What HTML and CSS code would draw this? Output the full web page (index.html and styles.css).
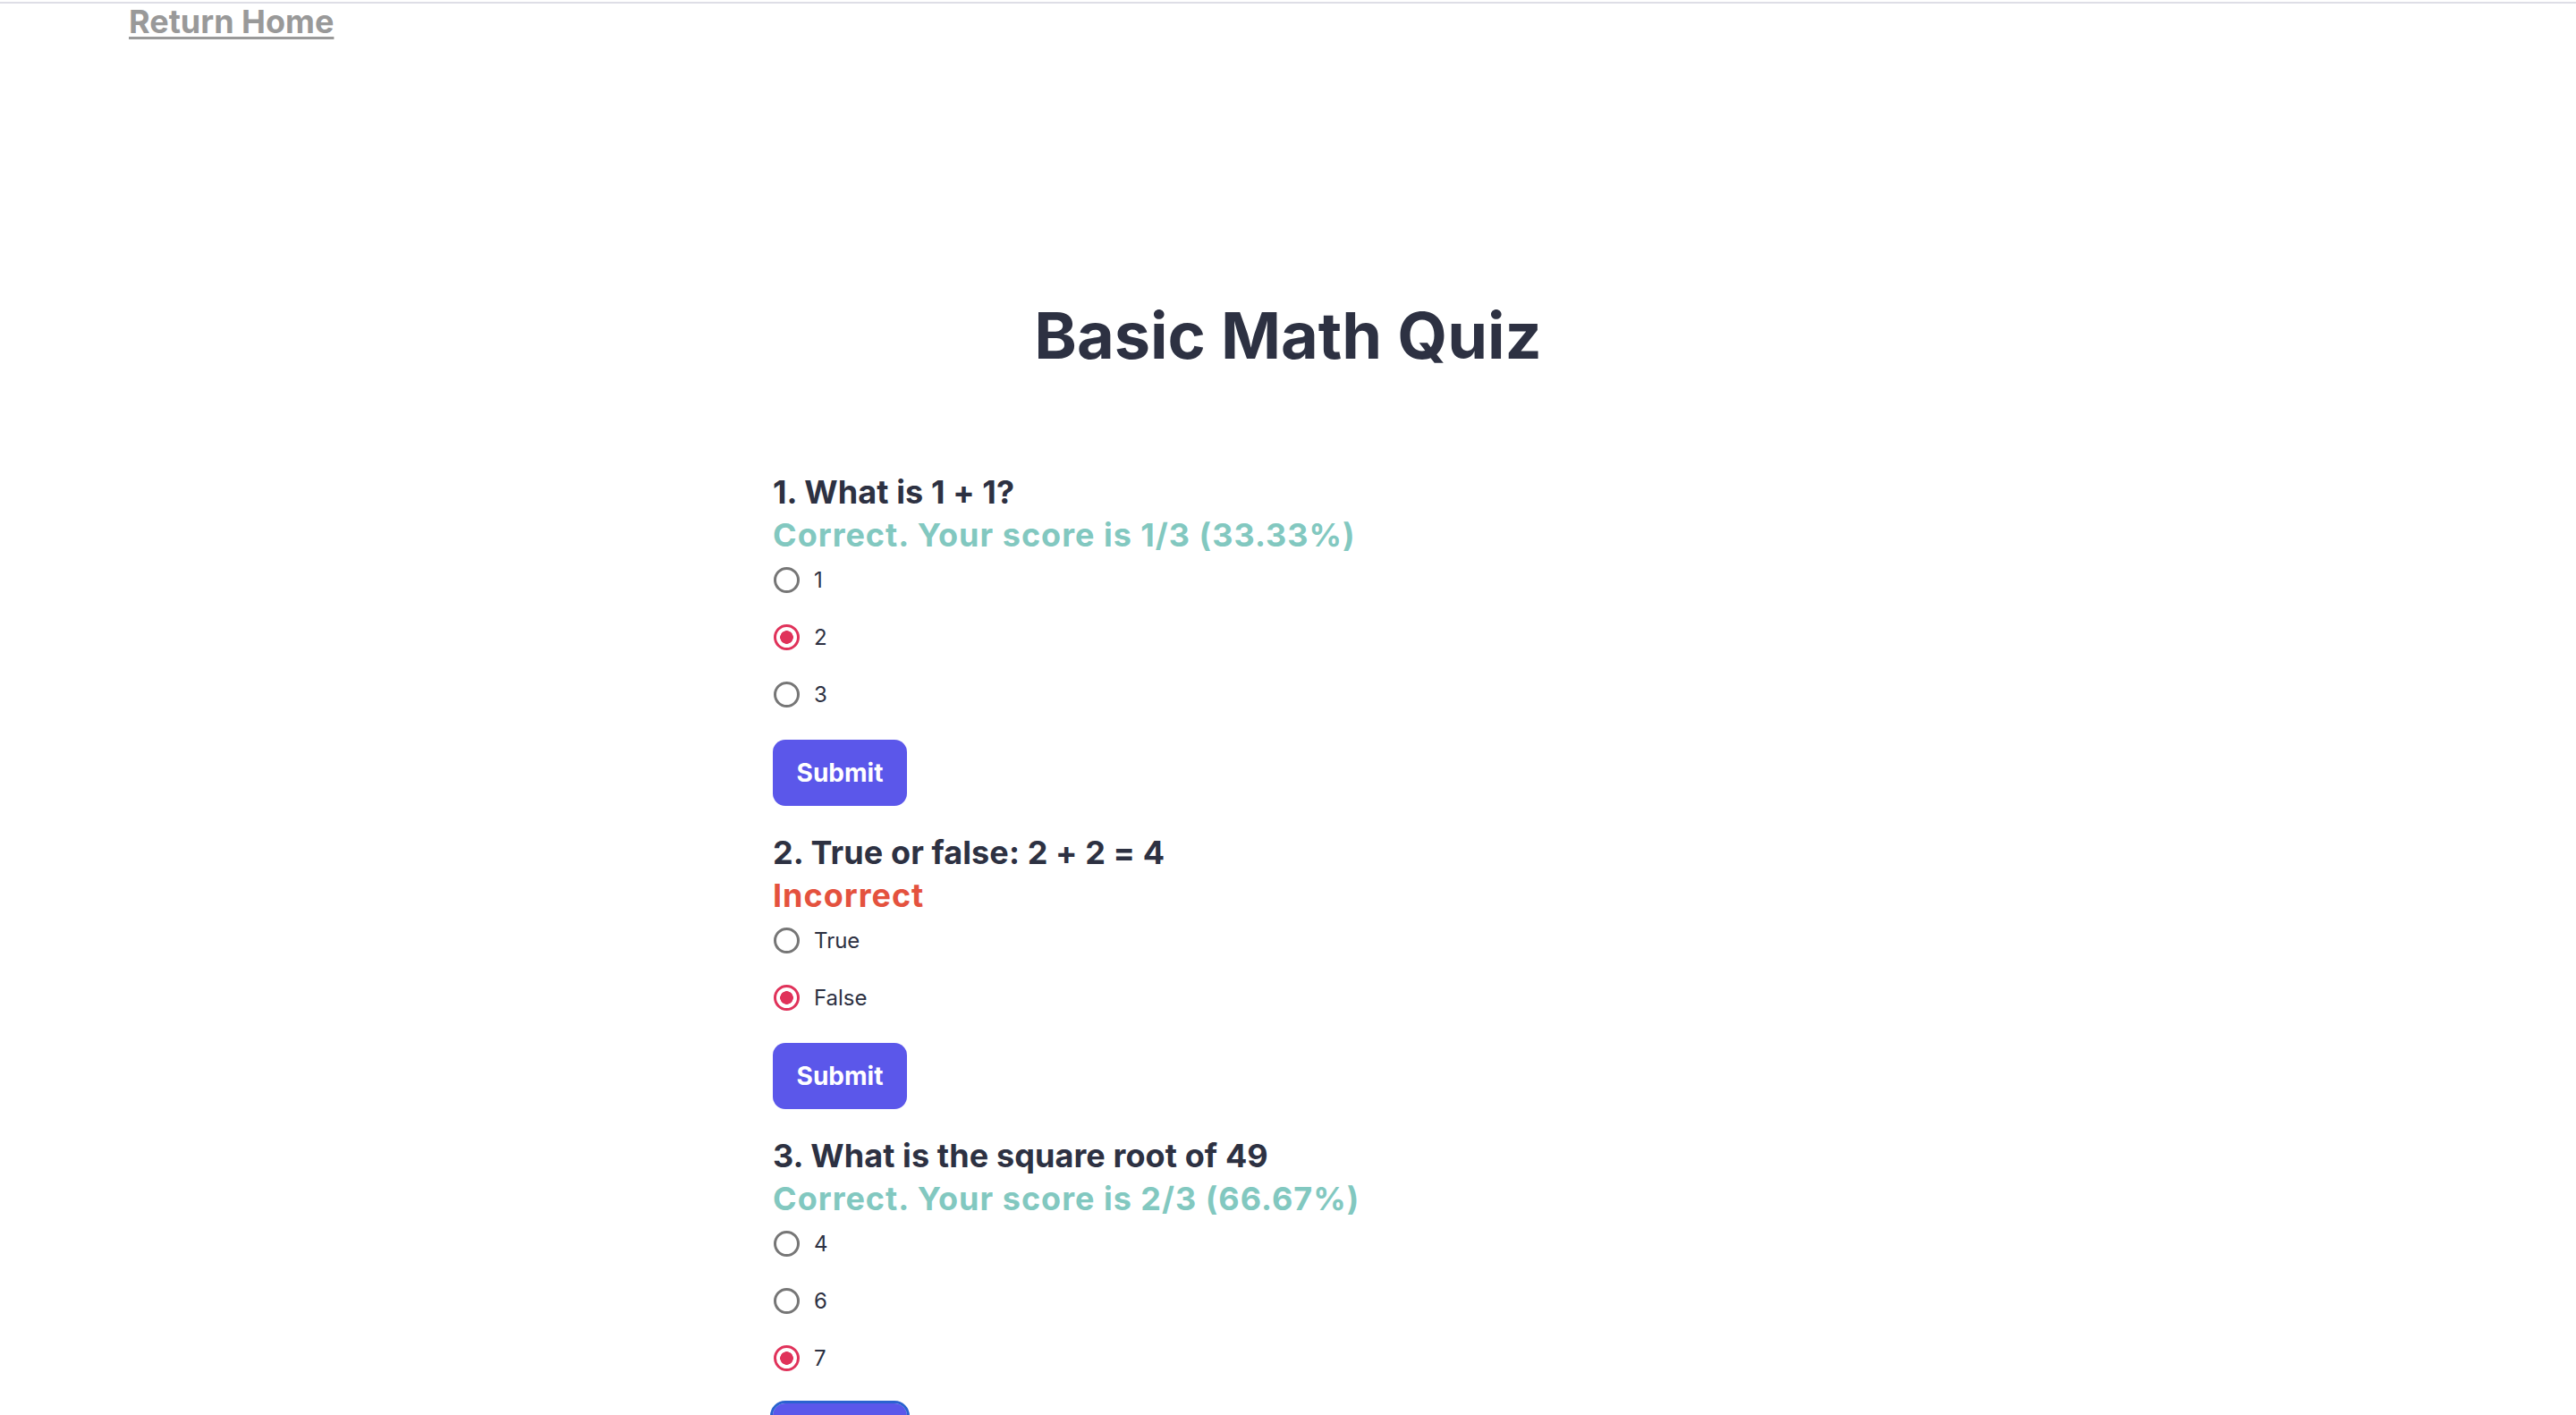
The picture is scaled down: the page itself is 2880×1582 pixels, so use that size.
FILE: index.html
```html
<!DOCTYPE html>
<html lang="en">
<head>
<meta charset="utf-8">
<title>Basic Math Quiz</title>
<link rel="stylesheet" href="styles.css">
</head>
<body>
<div class="topline"></div>
<nav class="nav"><a href="#" class="home-link">Return Home</a></nav>
<main class="container">
  <h1 class="title">Basic Math Quiz</h1>

  <form class="question">
    <h2 class="q-heading">1. What is 1 + 1?</h2>
    <p class="feedback correct">Correct. Your score is 1/3 (33.33%)</p>
    <div class="options">
      <label class="option"><input type="radio" name="q1" class="radio"><span>1</span></label>
      <label class="option"><input type="radio" name="q1" class="radio" checked><span>2</span></label>
      <label class="option"><input type="radio" name="q1" class="radio"><span>3</span></label>
    </div>
    <button type="button" class="submit">Submit</button>
  </form>

  <form class="question">
    <h2 class="q-heading">2. True or false: 2 + 2 = 4</h2>
    <p class="feedback incorrect">Incorrect</p>
    <div class="options">
      <label class="option"><input type="radio" name="q2" class="radio"><span>True</span></label>
      <label class="option"><input type="radio" name="q2" class="radio" checked><span>False</span></label>
    </div>
    <button type="button" class="submit">Submit</button>
  </form>

  <form class="question">
    <h2 class="q-heading">3. What is the square root of 49</h2>
    <p class="feedback correct">Correct. Your score is 2/3 (66.67%)</p>
    <div class="options">
      <label class="option"><input type="radio" name="q3" class="radio"><span>4</span></label>
      <label class="option"><input type="radio" name="q3" class="radio"><span>6</span></label>
      <label class="option"><input type="radio" name="q3" class="radio" checked><span>7</span></label>
    </div>
    <button type="button" class="submit focused">Submit</button>
  </form>
</main>
</body>
</html>
```

FILE: styles.css
```css
html, body {
  margin: 0;
  padding: 0;
  background: #ffffff;
  font-family: "Inter", "Liberation Sans", sans-serif;
  color: #2d3142;
}

.topline {
  margin-top: 2px;
  height: 2px;
  background: #dedee6;
}

.nav {
  padding-left: 144px;
  height: 40px;
  line-height: 40px;
}

.home-link {
  font-size: 36px;
  font-weight: 700;
  color: #999999;
  text-decoration: underline;
  text-decoration-thickness: 3px;
  text-underline-offset: 4px;
}

.container {
  width: 1152px;
  margin: 0 auto;
}

.title {
  margin: 291px 0 111px;
  font-size: 72px;
  line-height: 80px;
  font-weight: 700;
  text-align: center;
  color: #2d3142;
}

.question {
  display: flex;
  flex-direction: column;
  align-items: flex-start;
  margin: 0 0 28px;
}

.q-heading {
  margin: 0;
  font-size: 36px;
  line-height: 48px;
  font-weight: 700;
  letter-spacing: 0.1px;
  color: #2d3142;
}

.feedback {
  margin: 0;
  font-size: 36px;
  line-height: 48px;
  font-weight: 700;
  letter-spacing: 1px;
}

.correct { color: #82c8c0; }
.incorrect { color: #e4523e; }

.options {
  display: flex;
  flex-direction: column;
  gap: 12px;
}

.option {
  display: flex;
  align-items: center;
  gap: 16px;
  height: 52px;
  font-size: 24px;
  color: #2d3142;
}

.radio {
  appearance: none;
  -webkit-appearance: none;
  margin: 0 0 0 1px;
  width: 29px;
  height: 29px;
  border: 3px solid #767676;
  border-radius: 50%;
  background: #ffffff;
  box-sizing: border-box;
}

.radio:checked {
  border-color: #e0325a;
  background: radial-gradient(circle, #e0325a 0 7px, #ffffff 7.6px);
}

.submit {
  margin-top: 25px;
  width: 150px;
  height: 74px;
  border: none;
  border-radius: 14px;
  background: #5b57ea;
  color: #ffffff;
  font-family: "Inter", "Liberation Sans", sans-serif;
  font-size: 28px;
  font-weight: 700;
  padding: 0;
}

.submit.focused {
  outline: 3px solid #2a62d0;
  outline-offset: 0;
}
```
